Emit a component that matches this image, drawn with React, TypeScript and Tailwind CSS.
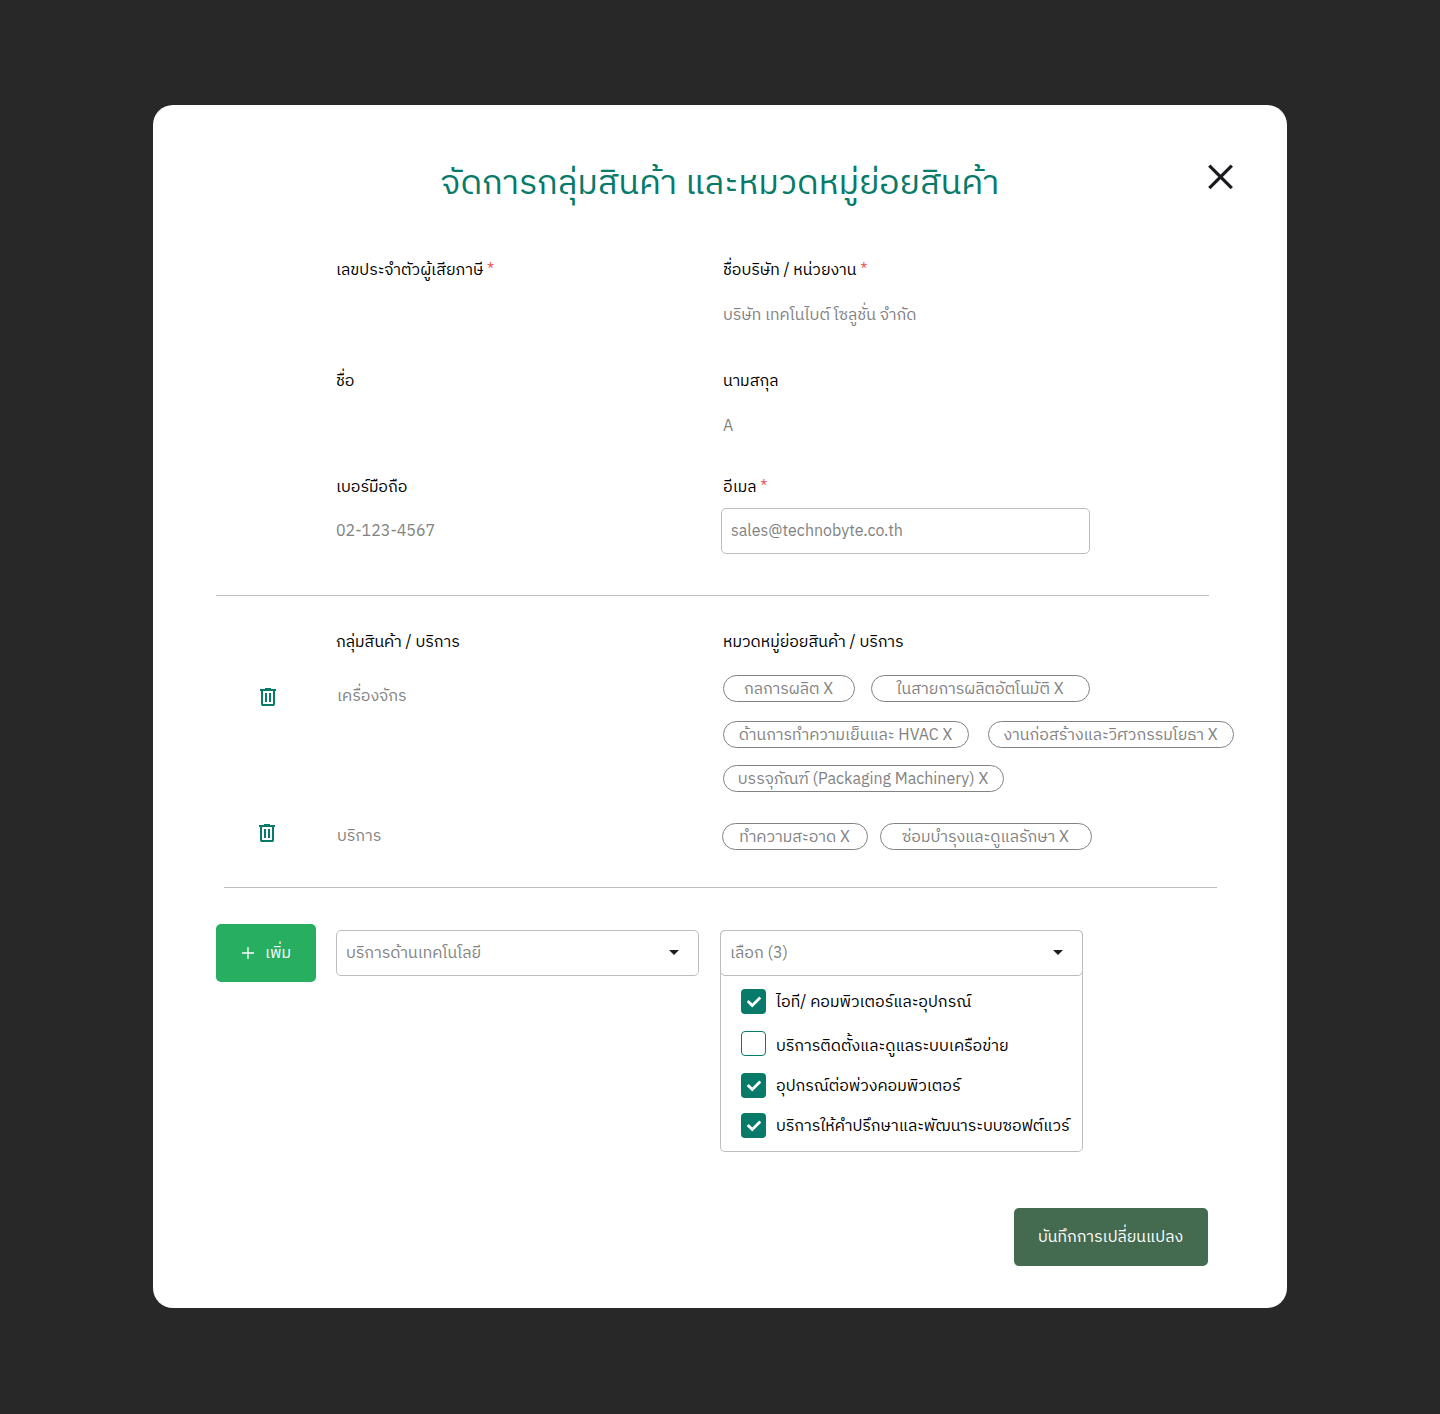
import { ReactNode } from "react";
import { FaCheck } from "react-icons/fa";

function Label({ children, required }: { children: ReactNode; required?: boolean }) {
  return (
    <div className="h-6 whitespace-nowrap leading-[26px] text-black">
      {children}
      {required && <span className="text-[#eb5757]"> *</span>}
    </div>
  );
}

function Trash() {
  return (
    <button className="block size-6" aria-label="ลบ">
      <svg viewBox="0 0 24 24" className="size-6 fill-[#077a69]">
        <path d="M7 21c-.55 0-1.02-.2-1.41-.59A1.93 1.93 0 0 1 5 19V6H4V4h5V3h6v1h5v2h-1v13c0 .55-.2 1.02-.59 1.41-.39.4-.86.59-1.41.59H7ZM17 6H7v13h10V6ZM9 17h2V8H9v9Zm4 0h2V8h-2v9Z" />
      </svg>
    </button>
  );
}

function Chip({ width, children }: { width: string; children: string }) {
  return (
    <span
      className={`flex h-[27px] shrink-0 items-center justify-center whitespace-nowrap rounded-full border border-[#828282] pr-px pt-[3px] ${width}`}
    >
      {children} X
    </span>
  );
}

function Select({ children }: { children: string }) {
  return (
    <div className="flex h-[46px] w-[363px] items-center justify-between rounded-[5px] border border-[#bdbdbd] bg-white pl-[9px] pr-3">
      <span className="pt-0.5">{children}</span>
      <svg viewBox="0 0 24 24" className="mb-0.5 size-6 fill-[#1c1b1f]">
        <path d="m7 10 5 5 5-5Z" />
      </svg>
    </div>
  );
}

function Option({ checked, gap, children }: { checked?: boolean; gap: string; children: string }) {
  return (
    <div className={`flex h-[25px] items-center gap-2.5 whitespace-nowrap text-black ${gap}`}>
      {checked ? (
        <span className="flex size-[25px] shrink-0 items-center justify-center rounded-[4px] bg-[#077a69] pl-px pt-px">
          <FaCheck className="size-3.5 text-white" />
        </span>
      ) : (
        <span className="size-[25px] shrink-0 rounded-[4px] border border-[#077a69]" />
      )}
      <span className={checked ? "pt-[3px]" : "pt-[7px]"}>{children}</span>
    </div>
  );
}

export default function App() {
  return (
    <div className="flex min-h-[1414px] justify-center bg-[#282828] pt-[105px] font-['IBM_Plex_Sans_Thai','Noto_Sans_Thai',sans-serif] text-base leading-6 text-[#828282]">
      <main className="h-[1203px] w-[1134px] rounded-[20px] bg-white">
        <header className="grid h-[153px] grid-cols-[1fr_auto_1fr] pt-[50px]">
          <span />
          <h1 className="mt-0.5 h-[54px] whitespace-nowrap text-[34px] leading-[54px] text-[#077a69]">
            จัดการกลุ่มสินค้า และหมวดหมู่ย่อยสินค้า
          </h1>
          <button className="mr-[54px] mt-[9px] size-[26px] justify-self-end" aria-label="ปิด">
            <svg viewBox="0 0 26 26" className="size-[26px] stroke-[#1c1b1f]" strokeWidth="3.3" fill="none">
              <path d="m2.300 1.700 22.500 22.500M24.800 1.700 2.300 24.200" />
            </svg>
          </button>
        </header>

        <section className="grid grid-cols-[387px_1fr] pl-[183px]">
          <Label required>เลขประจำตัวผู้เสียภาษี</Label>
          <Label required>ชื่อบริษัท / หน่วยงาน</Label>
          <span />
          <div className="mt-[21px] h-6 leading-[26px]">บริษัท เทคโนไบต์ โซลูชั่น จำกัด</div>
          <div className="mt-[42px]"><Label>ชื่อ</Label></div>
          <div className="mt-[42px]"><Label>นามสกุล</Label></div>
          <span />
          <div className="mt-[21px] h-6 leading-[26px]">A</div>
          <div className="mt-[37px]"><Label>เบอร์มือถือ</Label></div>
          <div className="mt-[37px]"><Label required>อีเมล</Label></div>
          <div className="mt-[9px] flex h-[46px] items-center pt-0.5">02-123-4567</div>
          <div className="-ml-0.5 mt-[9px] flex h-[46px] w-[369px] items-center rounded-[5px] border border-[#bdbdbd] pl-[9px] pt-0.5">
            sales@technobyte.co.th
          </div>
        </section>

        <hr className="ml-[63px] mt-[41px] w-[993px] border-[#bdbdbd]" />

        <section className="pt-[34px]">
          <div className="grid grid-cols-[387px_1fr] pl-[183px]">
            <Label>กลุ่มสินค้า / บริการ</Label>
            <Label>หมวดหมู่ย่อยสินค้า / บริการ</Label>
          </div>
          <div className="mt-[21px] grid h-[117px] grid-cols-[81px_386px_1fr] pl-[103px]">
            <div className="pt-2.5"><Trash /></div>
            <div className="pt-2.5">เครื่องจักร</div>
            <div>
              <div className="flex gap-4">
                <Chip width="w-[132px]">กลการผลิต</Chip>
                <Chip width="w-[219px]">ในสายการผลิตอัตโนมัติ</Chip>
              </div>
              <div className="mt-[19px] flex gap-[19px]">
                <Chip width="w-[246px]">ด้านการทำความเย็นและ HVAC</Chip>
                <Chip width="w-[246px]">งานก่อสร้างและวิศวกรรมโยธา</Chip>
              </div>
              <div className="mt-[17px] flex">
                <Chip width="w-[281px]">บรรจุภัณฑ์ (Packaging Machinery)</Chip>
              </div>
            </div>
          </div>
          <div className="mt-[29px] grid h-[29px] grid-cols-[82px_385px_1fr] pl-[102px]">
            <div><Trash /></div>
            <div className="pt-1">บริการ</div>
            <div className="flex gap-3 pt-0.5">
              <Chip width="w-[146px]">ทำความสะอาด</Chip>
              <Chip width="w-[212px]">ซ่อมบำรุงและดูแลรักษา</Chip>
            </div>
          </div>
        </section>

        <hr className="ml-[71px] mt-[37px] w-[993px] border-[#bdbdbd]" />

        <section className="flex h-[228px] pl-[63px] pt-9">
          <button className="mr-5 flex h-[58px] w-[100px] items-center rounded-[5px] bg-[#27ae60] pl-[25px] text-white">
            <svg viewBox="0 0 14 14" className="mr-2.5 size-3.5 stroke-white" strokeWidth="1.3" fill="none">
              <path d="M7 1v12M1 7h12" />
            </svg>
            <span className="pt-0.5">เพิ่ม</span>
          </button>
          <div className="mr-[21px] pt-1.5">
            <Select>บริการด้านเทคโนโลยี</Select>
          </div>
          <div className="pt-1.5">
            <div className="h-[222px] w-[363px] rounded-[5px] bg-white shadow-[inset_0_0_0_1px_#bdbdbd]">
              <Select>เลือก (3)</Select>
              <div className="pl-[21px] pt-[13px]">
                <Option checked gap="">ไอที/ คอมพิวเตอร์และอุปกรณ์</Option>
                <Option gap="mt-[17px]">บริการติดตั้งและดูแลระบบเครือข่าย</Option>
                <Option checked gap="mt-[17px]">อุปกรณ์ต่อพ่วงคอมพิวเตอร์</Option>
                <Option checked gap="mt-[15px]">บริการให้คำปรึกษาและพัฒนาระบบซอฟต์แวร์</Option>
              </div>
            </div>
          </div>
        </section>

        <footer className="flex justify-end pr-[79px] pt-[92px]">
          <button className="h-[58px] w-[194px] rounded-[5px] bg-[#446b4f] pr-px pt-0.5 text-white">
            บันทึกการเปลี่ยนแปลง
          </button>
        </footer>
      </main>
    </div>
  );
}
